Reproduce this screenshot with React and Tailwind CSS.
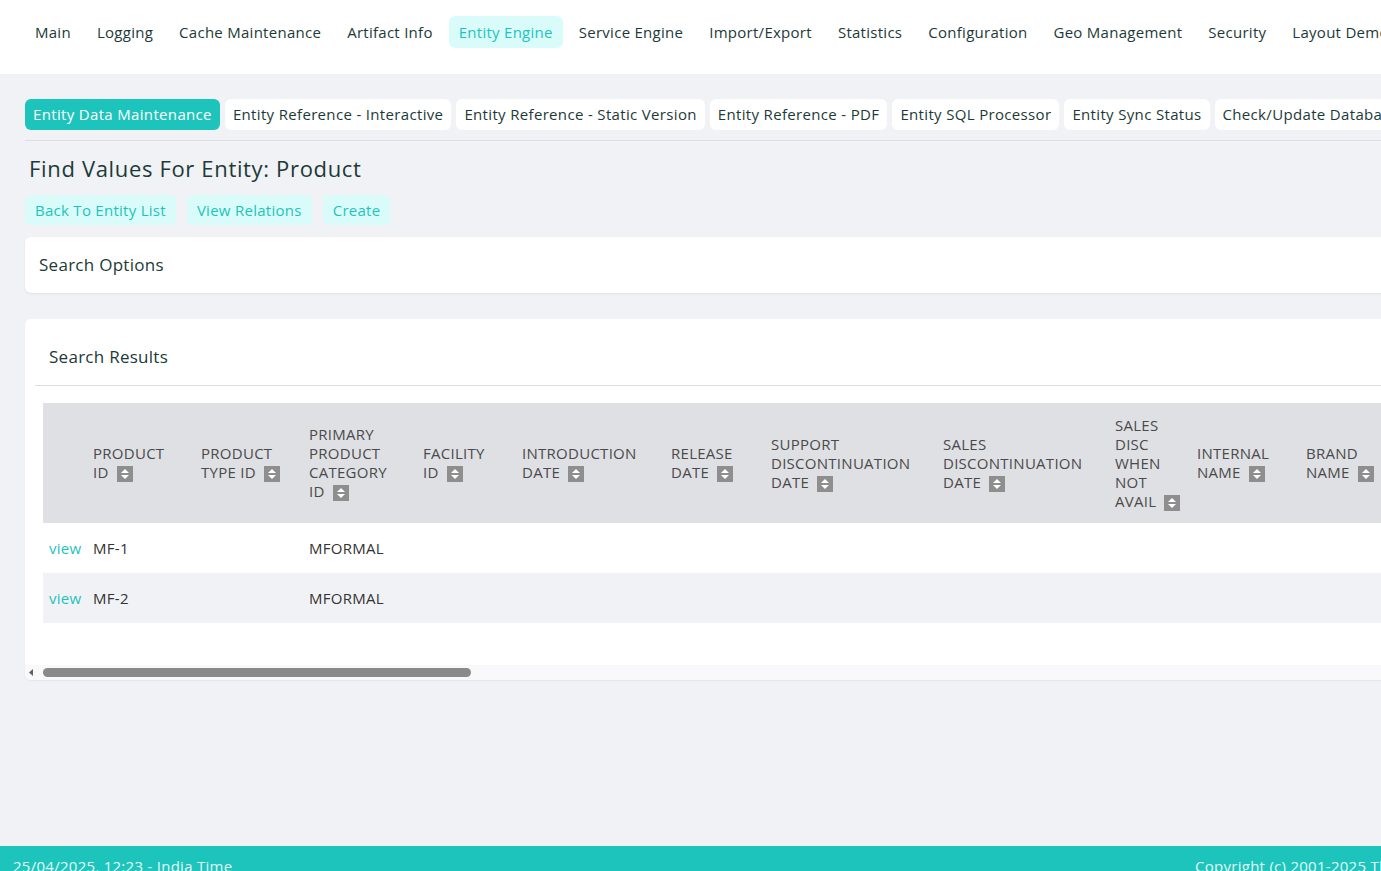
import React from 'react';

const font = { fontFamily: '"Open Sans", "Noto Sans", sans-serif' };

const topNav = [
  'Main', 'Logging', 'Cache Maintenance', 'Artifact Info', 'Entity Engine', 'Service Engine',
  'Import/Export', 'Statistics', 'Configuration', 'Geo Management', 'Security', 'Layout Demo',
];

const subTabs = [
  'Entity Data Maintenance', 'Entity Reference - Interactive', 'Entity Reference - Static Version',
  'Entity Reference - PDF', 'Entity SQL Processor', 'Entity Sync Status', 'Check/Update Database',
];

// header lines are written out so the wrapping matches the picture
const columns = [
  { w: 'w-[108px] min-w-[108px]', lines: ['PRODUCT', 'ID'] },
  { w: 'w-[108px] min-w-[108px]', lines: ['PRODUCT', 'TYPE ID'] },
  { w: 'w-[114px] min-w-[114px]', lines: ['PRIMARY', 'PRODUCT', 'CATEGORY', 'ID'] },
  { w: 'w-[99px] min-w-[99px]', lines: ['FACILITY', 'ID'] },
  { w: 'w-[149px] min-w-[149px]', lines: ['INTRODUCTION', 'DATE'] },
  { w: 'w-[100px] min-w-[100px]', lines: ['RELEASE', 'DATE'] },
  { w: 'w-[172px] min-w-[172px]', lines: ['SUPPORT', 'DISCONTINUATION', 'DATE'] },
  { w: 'w-[172px] min-w-[172px]', lines: ['SALES', 'DISCONTINUATION', 'DATE'] },
  { w: 'w-[82px] min-w-[82px]', lines: ['SALES', 'DISC', 'WHEN', 'NOT', 'AVAIL'] },
  { w: 'w-[109px] min-w-[109px]', lines: ['INTERNAL', 'NAME'] },
  { w: 'w-[109px] min-w-[109px]', lines: ['BRAND', 'NAME'] },
  { w: 'w-[120px] min-w-[120px]', lines: ['PRODUCT', 'NAME'] },
  { w: 'w-[160px] min-w-[160px]', lines: ['DESCRIPTION'] },
];

const rows = [
  { id: 'MF-1', category: 'MFORMAL' },
  { id: 'MF-2', category: 'MFORMAL' },
];

const SortIcon = () => (
  <span className="inline-flex items-center justify-center w-[16px] h-[16px] bg-[#8e8e8e] align-[-2px] ml-[8px]">
    <svg width="10" height="12" viewBox="0 0 10 12">
      <path d="M1 5 L5 1 L9 5 Z" fill="#ffffff" />
      <path d="M1 7 L5 11 L9 7 Z" fill="#ffffff" />
    </svg>
  </span>
);

const HeaderCell = ({ w, lines }) => (
  <th className={`${w} pl-[6px] pr-[6px] text-left align-middle font-normal text-[15px] leading-[19px] text-[#4a4a4a]`}>
    {lines.map((line, i) => (
      <div key={i} className="whitespace-nowrap">
        {line}
        {i === lines.length - 1 && <SortIcon />}
      </div>
    ))}
  </th>
);

export default function App() {
  return (
    <div style={font} className="w-[1381px] min-h-[871px] overflow-hidden bg-[#f1f2f6] flex flex-col text-[#1c3a37] tracking-[0.017em]">
      {/* Top navigation */}
      <nav className="h-[74px] bg-white flex items-start pt-[16px] gap-[6px] px-[25px] whitespace-nowrap shrink-0">
        {topNav.map((item) => (
          <a
            key={item}
            className={`px-[10px] h-[32px] flex items-center rounded-[6px] text-[15px] ${
              item === 'Entity Engine' ? 'bg-[#d9fcfa] text-[#1dc4bc]' : 'text-[#1c3a37]'
            }`}
          >
            {item}
          </a>
        ))}
      </nav>

      <main className="flex-1 w-[1700px] px-[25px] pt-[25px]">
        {/* Sub tabs */}
        <div className="flex gap-[5px] pb-[10px] border-b border-[#dcdde1] whitespace-nowrap tracking-[0.021em]">
          {subTabs.map((tab, i) => (
            <a
              key={tab}
              className={`h-[31px] px-[8px] flex items-center rounded-[6px] text-[15px] ${
                i === 0 ? 'bg-[#1dc4bc] text-white' : 'bg-white text-[#1c3a37]'
              }`}
            >
              {tab}
            </a>
          ))}
        </div>

        <h1 className="mt-[14px] ml-[4px] text-[22px] leading-[26px] font-medium tracking-[0.03em] text-[#1c3a37]">
          Find Values For Entity: Product
        </h1>

        {/* Action buttons */}
        <div className="flex gap-[11px] mt-[14px]">
          {['Back To Entity List', 'View Relations', 'Create'].map((b) => (
            <a key={b} className="h-[30px] px-[10px] flex items-center rounded-[6px] bg-[#d9fcfa] text-[#1dc4bc] text-[15px]">
              {b}
            </a>
          ))}
        </div>

        {/* Search options */}
        <div className="mt-[12px] h-[56px] bg-white rounded-[6px] shadow-[0_1px_2px_rgba(0,0,0,0.08)] flex items-center px-[14px]">
          <span className="text-[17px] font-medium">Search Options</span>
        </div>

        {/* Search results */}
        <div className="mt-[26px] bg-white rounded-[6px] shadow-[0_1px_2px_rgba(0,0,0,0.06)]">
          <div className="px-[10px] pt-[10px]">
            <div className="h-[57px] border-b border-[#dcdde1] flex items-center px-[14px]">
              <span className="text-[17px] font-medium">Search Results</span>
            </div>
          </div>

          <div className="pl-[18px] pt-[17px] pb-[42px] overflow-hidden">
            <table className="border-collapse">
              <thead>
                <tr className="h-[120px] bg-[#dfe0e4]">
                  <th className="w-[44px] min-w-[44px]" />
                  {columns.map((c, i) => (
                    <HeaderCell key={i} {...c} />
                  ))}
                </tr>
              </thead>
              <tbody>
                {rows.map((r, i) => (
                  <tr key={r.id} className={`h-[50px] text-[15px] text-[#333333] ${i % 2 ? 'bg-[#f1f2f6]' : 'bg-white'}`}>
                    <td className="pl-[6px] text-[#1dc4bc]">view</td>
                    <td className="pl-[6px]">{r.id}</td>
                    <td className="pl-[6px]" />
                    <td className="pl-[6px]">{r.category}</td>
                    {columns.slice(3).map((_, j) => (
                      <td key={j} />
                    ))}
                  </tr>
                ))}
              </tbody>
            </table>
          </div>

          {/* Horizontal scrollbar */}
          <div className="h-[15px] bg-[#f9f9fb] flex items-center rounded-b-[6px]">
            <svg width="18" height="15" viewBox="0 0 18 15" className="shrink-0">
              <path d="M4 7.5 L8 4 L8 11 Z" fill="#5f5f5f" />
            </svg>
            <div className="h-[9px] w-[428px] rounded-full bg-[#8a8a8a]" />
          </div>
        </div>
      </main>

      {/* Footer */}
      <footer className="mt-[166px] h-[40px] w-[1700px] bg-[#1dc4bc] flex items-start pt-[8px] text-[15px] leading-[24px] text-[#e3f8f6] shrink-0">
        <span className="w-[1195px] pl-[13px]">25/04/2025, 12:23 - India Time</span>
        <span>Copyright (c) 2001-2025 The Apache Software Foundation</span>
      </footer>
    </div>
  );
}
